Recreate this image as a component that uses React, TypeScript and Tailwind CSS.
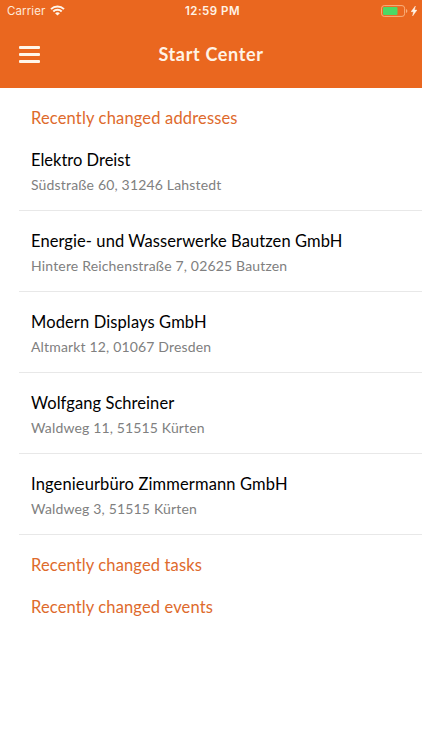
const addresses = [
  { name: "Elektro Dreist", place: "Südstraße 60, 31246 Lahstedt", nameTrack: "tracking-[0px]", placeTrack: "tracking-[0.17px]" },
  { name: "Energie- und Wasserwerke Bautzen GmbH", place: "Hintere Reichenstraße 7, 02625 Bautzen", nameTrack: "tracking-[0.08px]", placeTrack: "tracking-[0.17px]" },
  { name: "Modern Displays GmbH", place: "Altmarkt 12, 01067 Dresden", nameTrack: "tracking-[0.12px]", placeTrack: "tracking-[0.16px]" },
  { name: "Wolfgang Schreiner", place: "Waldweg 11, 51515 Kürten", nameTrack: "tracking-[0.06px]", placeTrack: "tracking-[0.15px]" },
  { name: "Ingenieurbüro Zimmermann GmbH", place: "Waldweg 3, 51515 Kürten", nameTrack: "tracking-[0.13px]", placeTrack: "tracking-[0.17px]" },
];

function StatusBar() {
  return (
    <div className="grid h-[22px] grid-cols-3 items-center pl-[7px] pr-[5px] font-['Inter',sans-serif] text-[11.5px] leading-[22px]">
      <div className="flex items-center gap-[5px] text-[#ffe9d8]">
        <span className="tracking-[0.1px]">Carrier</span>
        <svg className="-mt-px" width="15" height="11" viewBox="0 0 15 11" fill="none" stroke="#fff6ea" strokeWidth="2">
          <path d="M1 4.1C4.6.6 10.4.6 14 4.1" />
          <path d="M3.3 6.5C5.6 4.3 9.4 4.3 11.7 6.5" />
          <path d="M7.5 10.5 5.1 8.2C6.4 7 8.6 7 9.9 8.2Z" fill="#fff6ea" stroke="none" />
        </svg>
      </div>
      <span className="pl-px text-center font-semibold tracking-[0.5px] text-[#fff3e6]">12:59 PM</span>
      <div className="flex items-center justify-end gap-[3px]">
        <svg className="-mt-px" width="27" height="12" viewBox="0 0 27 12">
          <rect x="0.6" y="0.6" width="23" height="10.8" rx="2.6" fill="none" stroke="#f9b07c" strokeWidth="1" />
          <rect x="2" y="2" width="14.5" height="8" rx="1" fill="#4cd964" />
          <path d="M25 4v4q1.4-.5 1.4-2T25 4Z" fill="#f9b07c" />
        </svg>
        <svg className="-mt-px" width="6" height="10" viewBox="0 0 6 10">
          <path d="M4.4 0 0 5.7h2.5L1.6 10 6 4.1H3.5Z" fill="#fff6ea" stroke="#fff6ea" strokeWidth="0.4" />
        </svg>
      </div>
    </div>
  );
}

export default function App() {
  return (
    <div className="flex h-[750px] w-full flex-col overflow-hidden bg-white font-['Lato',sans-serif]">
      <header className="h-[88px] shrink-0 bg-[#ea671f]">
        <StatusBar />
        <div className="grid h-[66px] grid-cols-[60px_1fr_60px] items-start pt-[18px]">
          <button aria-label="Menu" className="ml-[19px] mt-[6px] flex w-[21px] flex-col gap-[4px]">
            <span className="h-[3px] rounded-[1px] bg-[#fff6ea]" />
            <span className="h-[3px] rounded-[1px] bg-[#fff6ea]" />
            <span className="h-[3px] rounded-[1px] bg-[#fff6ea]" />
          </button>
          <h1 className="text-center text-[18px] font-bold leading-7 tracking-[0.65px] text-[#fff3e6]">Start Center</h1>
        </div>
      </header>
      <main>
        <h2 className="pl-[31px] pt-[18px] text-[16.5px] leading-6 tracking-[0.16px] text-[#de6a2c]">Recently changed addresses</h2>
        <ul className="pl-[19px]">
          {addresses.map((a) => (
            <li key={a.name} className="h-[81.1px] border-b border-[#e8e8e8] pl-3 pt-[18px]">
              <div className={"text-[16.5px] leading-6 text-black " + a.nameTrack}>{a.name}</div>
              <div className={"mt-[3px] text-[14px] leading-5 text-[#808080] " + a.placeTrack}>{a.place}</div>
            </li>
          ))}
        </ul>
        <h2 className="pl-[31px] pt-[18px] text-[16.5px] leading-6 tracking-[0.13px] text-[#de6a2c]">Recently changed tasks</h2>
        <h2 className="pl-[31px] pt-[18px] text-[16.5px] leading-6 tracking-[0.13px] text-[#de6a2c]">Recently changed events</h2>
      </main>
    </div>
  );
}
